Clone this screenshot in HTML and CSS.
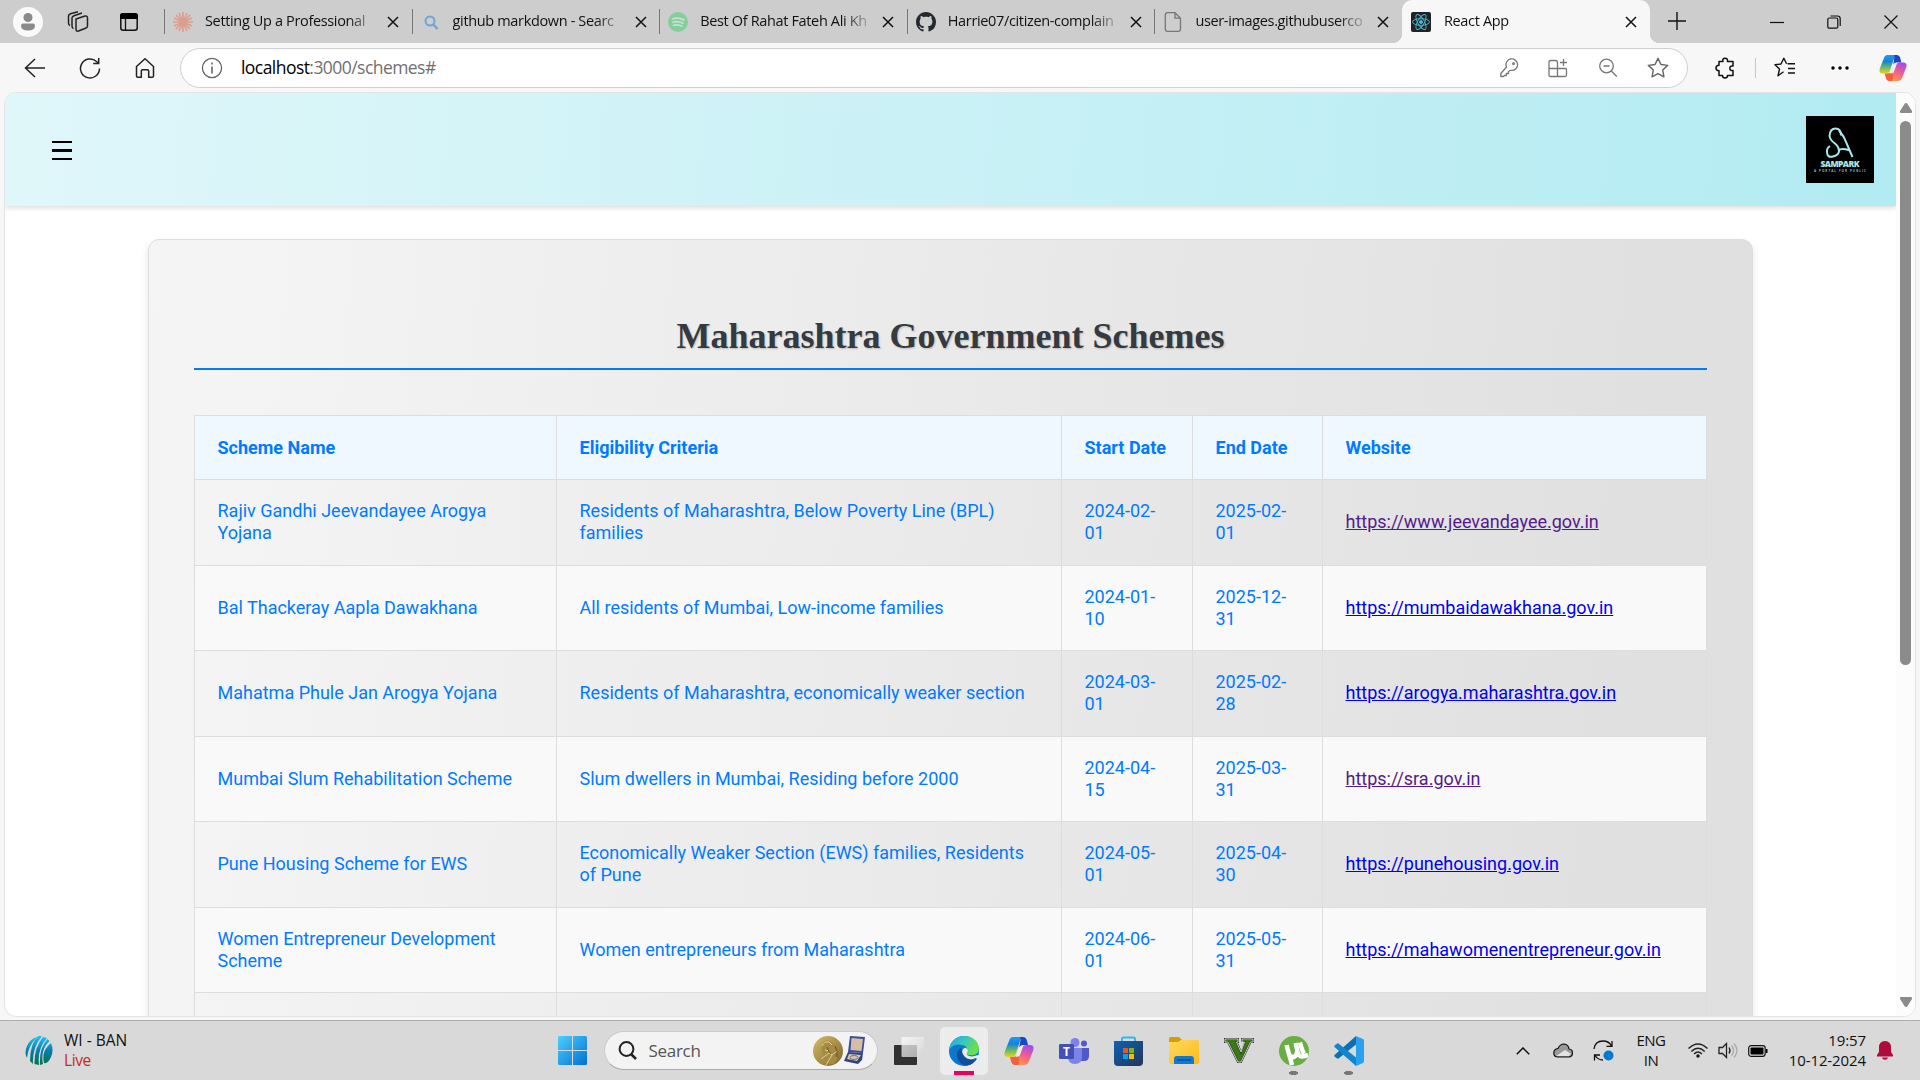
FILE: index.html
```html
<!DOCTYPE html>
<html lang="en">
<head>
<meta charset="utf-8">
<title>React App</title>
<link rel="stylesheet" href="styles.css">
</head>
<body>
<svg width="0" height="0" class="defs" aria-hidden="true">
  <defs>
    <linearGradient id="cpA" x1="0" y1="0" x2="0" y2="1"><stop offset="0" stop-color="#1a9cf0"/><stop offset=".35" stop-color="#1b7fe0"/><stop offset=".65" stop-color="#5fba6a"/><stop offset="1" stop-color="#f3cf1b"/></linearGradient>
    <linearGradient id="cpB" x1=".7" y1="0" x2=".3" y2="1"><stop offset="0" stop-color="#a24bf0"/><stop offset=".45" stop-color="#ee5a97"/><stop offset="1" stop-color="#ff9a45"/></linearGradient>
    <linearGradient id="blu" x1="0" y1="0" x2="1" y2="1"><stop offset="0" stop-color="#4cd0ff"/><stop offset="1" stop-color="#0070d0"/></linearGradient>
    <linearGradient id="edgeA" x1="0" y1="0" x2="1" y2=".4"><stop offset="0" stop-color="#1fa6e0"/><stop offset=".5" stop-color="#35c5c5"/><stop offset="1" stop-color="#6be04a"/></linearGradient>
    <linearGradient id="icc" x1="0" y1="0" x2="0" y2="30" gradientUnits="userSpaceOnUse"><stop offset="0" stop-color="#22c4f4"/><stop offset=".5" stop-color="#067cae"/><stop offset="1" stop-color="#08703c"/></linearGradient>
    <linearGradient id="fold" x1="0" y1="0" x2="1" y2="1"><stop offset="0" stop-color="#ffd95e"/><stop offset="1" stop-color="#fbbb18"/></linearGradient>
    <linearGradient id="gold" x1="0" y1="0" x2="1" y2="1"><stop offset="0" stop-color="#d5bd68"/><stop offset="1" stop-color="#7d6427"/></linearGradient>
    <linearGradient id="store" x1="0" y1="0" x2="1" y2="1"><stop offset="0" stop-color="#0d62b4"/><stop offset="1" stop-color="#263556"/></linearGradient>
    <linearGradient id="glass" x1="0" y1="0" x2="1" y2="1"><stop offset="0" stop-color="#fff"/><stop offset="1" stop-color="#d4d4d4"/></linearGradient>
    <clipPath id="utClip"><circle cx="15" cy="15" r="15"/></clipPath>
    <symbol id="copilot" viewBox="0 0 30 28">
      <path d="M19 0H9Q6 0 5 4L1 14q-2 6 3 6h4q3 0 4-4l4-12q1-4 5-4z" fill="url(#cpA)"/>
      <path d="M16 0h3q3 0 4 4l1 4h-4q-4 0-5 4l1-6q1-4 0-6z" fill="#1947c8"/>
      <path d="M11 28h9q4 0 5-4l4-10q2-6-3-6h-4q-3 0-4 4l-4 11q-1 5-5 5z" fill="url(#cpB)"/>
      <path d="M14 28h-3q-3 0-4-4l-1-4h3q4 0 5-4l1 5q1 4-1 7z" fill="#f2613c"/>
      <path d="M15 10.500q1.300-2.500 4.500-2.500L16 17.500q-1 2.500-4.300 2.500z" fill="#f0ecec"/>
    </symbol>
    <symbol id="x" viewBox="0 0 12 12"><path d="M1 1l10 10M11 1L1 11" fill="none" stroke="#111" stroke-width="1.500"/></symbol>
    <symbol id="star" viewBox="0 0 20 20"><path d="M10 1.200l2.700 5.600 6.100.8-4.500 4.300 1.100 6.100L10 15.100 4.600 18l1.100-6.100L1.200 7.600l6.100-.8z" fill="none" stroke="#666" stroke-width="1.300" stroke-linejoin="round"/></symbol>
  </defs>
</svg>

<header class="tabstrip">
  <div class="strip-tools">
    <span class="avatar"><svg width="16" height="18" viewBox="0 0 16 18" fill="#8a8a8a"><circle cx="8" cy="4.500" r="4.500"/><path d="M1 12.500q0-2 2-2h10q2 0 2 2 0 5-7 5t-7-5z"/></svg></span>
    <svg class="workspaces" width="22" height="22" viewBox="0 0 22 22" fill="none" stroke="#222" stroke-width="1.500"><path d="M9 8l9-3q2.500-.5 2.500 2v8q0 1.500-2 2.300l-7 2.700Q9 20.700 9 18z"/><path d="M6.500 17.500Q5 17 5 15V7q0-1.500 2-2.300L15 2"/><path d="M3 14.500Q1.500 14 1.500 12V5q0-1.500 2-2.300L11 .8"/></svg>
    <svg width="18" height="18" viewBox="0 0 18 18"><rect x=".8" y=".8" width="16.400" height="16.400" rx="2.500" fill="none" stroke="#111" stroke-width="1.500"/><path d="M0 3q0-3 3-3h12q3 0 3 3v3H0z"/><path d="M5.500 6v11" stroke="#111" stroke-width="1.300"/></svg>
  </div>
  <div class="tab"><svg class="fav" width="20" height="20" viewBox="0 0 20 20" stroke="#dc9d8d" stroke-width="1.700"><path d="M10 0v20M0 10h20M3 3l14 14M17 3L3 17M6 1l8 18M14 1L6 19M1 6l18 8M1 14l18-8"/></svg><span class="tab-title">Setting Up a Professional</span><svg class="tab-x"><use href="#x"/></svg></div>
  <div class="tab"><svg class="fav" width="20" height="20" viewBox="0 0 20 20" fill="none" stroke="#72a5d2" stroke-width="2"><circle cx="9" cy="9" r="4.500"/><path d="M12 12l4.500 5" stroke-width="2.500"/></svg><span class="tab-title">github markdown - Searc</span><svg class="tab-x"><use href="#x"/></svg></div>
  <div class="tab"><svg class="fav" width="20" height="20" viewBox="0 0 20 20" fill="none" stroke="#ceded2" stroke-width="1.700" stroke-linecap="round"><circle cx="10" cy="10" r="10" fill="#83cf9c" stroke="none"/><path d="M4.500 7q6-2 11.500 1M5 10.200q5-1.500 10 1M5.500 13.200q4.500-1.200 8.500 1"/></svg><span class="tab-title">Best Of Rahat Fateh Ali Kh</span><svg class="tab-x"><use href="#x"/></svg></div>
  <div class="tab"><svg class="fav" width="20" height="20" viewBox="0 0 16 16"><path fill="#24292f" d="M8 0C3.580 0 0 3.580 0 8c0 3.540 2.290 6.530 5.470 7.590.4.070.55-.17.55-.38 0-.19-.01-.82-.01-1.490-2.010.37-2.530-.49-2.690-.94-.09-.23-.48-.94-.82-1.130-.28-.15-.68-.52-.01-.53.63-.01 1.080.58 1.230.82.72 1.210 1.870.87 2.330.66.07-.52.28-.87.51-1.070-1.780-.2-3.640-.89-3.640-3.950 0-.87.31-1.590.82-2.150-.08-.2-.36-1.020.08-2.120 0 0 .67-.21 2.200.82.640-.18 1.320-.27 2-.27s1.360.09 2 .27c1.530-1.040 2.200-.82 2.200-.82.44 1.100.16 1.920.08 2.120.51.56.82 1.270.82 2.150 0 3.070-1.870 3.750-3.650 3.950.29.25.54.73.54 1.480 0 1.070-.01 1.930-.01 2.200 0 .21.150.46.55.38A8.010 8.010 0 0016 8c0-4.420-3.580-8-8-8z"/></svg><span class="tab-title">Harrie07/citizen-complain</span><svg class="tab-x"><use href="#x"/></svg></div>
  <div class="tab"><svg class="fav" width="20" height="20" viewBox="0 0 20 20" fill="none" stroke="#777" stroke-width="1.300"><path d="M4.500.7H12l5.500 5.500V17q0 2.300-2.300 2.300H4.500Q2.300 19.300 2.300 17V3Q2.300.7 4.500.7zM12 .7v5.500h5.500"/></svg><span class="tab-title">user-images.githubuserco</span><svg class="tab-x"><use href="#x"/></svg></div>
  <div class="tab active"><svg class="fav" width="20" height="20" viewBox="0 0 20 20" fill="none" stroke="#4fb9d6" stroke-width=".9"><rect width="20" height="20" rx="2" fill="#222" stroke="none"/><ellipse cx="10" cy="10" rx="8.500" ry="3.300"/><ellipse cx="10" cy="10" rx="8.500" ry="3.300" transform="rotate(60 10 10)"/><ellipse cx="10" cy="10" rx="8.500" ry="3.300" transform="rotate(120 10 10)"/><circle cx="10" cy="10" r="1.500" fill="#4fb9d6"/></svg><span class="tab-title">React App</span><svg class="tab-x"><use href="#x"/></svg></div>
  <svg class="newtab" width="18" height="18" viewBox="0 0 18 18" stroke="#111" stroke-width="1.400"><path d="M9 0v18M0 9h18"/></svg>
  <div class="winbtns">
    <svg width="14" height="14" viewBox="0 0 14 14" stroke="#111" stroke-width="1.200"><path d="M0 7.500h14"/></svg>
    <svg width="14" height="14" viewBox="0 0 14 14" fill="none" stroke="#111" stroke-width="1.200"><rect x=".8" y="3" width="10" height="10.200" rx="1.500"/><path d="M3.500 1h7q2.700 0 2.700 2.700V11"/></svg>
    <svg width="14" height="14" viewBox="0 0 14 14" stroke="#111" stroke-width="1.200"><path d="M.5.5l13 13M13.500.5l-13 13"/></svg>
  </div>
</header>

<nav class="toolbar">
  <div class="navbtns">
    <svg width="22" height="22" viewBox="0 0 22 22" fill="none" stroke="#222" stroke-width="1.500"><path d="M21 11H2M11 2l-9.500 9L11 20"/></svg>
    <svg width="22" height="22" viewBox="0 0 22 22" fill="none" stroke="#222" stroke-width="1.500"><path d="M20.500 11.500A9.500 9.500 0 1 1 17.500 4.500L19.500 6M19.700 1v5.500h-5.500"/></svg>
    <svg width="22" height="22" viewBox="0 0 22 22" fill="none" stroke="#222" stroke-width="1.500" stroke-linejoin="round"><path d="M2.500 9.500L11 1.800l8.500 7.700V19q0 1.300-1.300 1.300h-3.500V14q0-1.200-1.200-1.200h-5Q7.300 12.800 7.300 14v6.300H3.800q-1.300 0-1.300-1.300z"/></svg>
  </div>
  <div class="address">
    <svg width="22" height="22" viewBox="0 0 22 22" fill="none" stroke="#666" stroke-width="1.300"><circle cx="11" cy="11" r="9.600"/><path d="M11 9.500v7M11 5.500v2" stroke-width="1.600"/></svg>
    <span class="url"><b>localhost</b>:3000/schemes#</span>
    <div class="address-icons">
      <svg width="20" height="20" viewBox="0 0 20 20" fill="none" stroke="#777" stroke-width="1.300" stroke-linejoin="round"><path d="M7.500 9A5.800 5.800 0 1 1 11.500 12.300L9.500 13.500v2H7.300v2H5.500l-1 1H1.800v-3z"/><circle cx="14.500" cy="5.700" r=".8" fill="#777"/></svg>
      <svg width="20" height="20" viewBox="0 0 20 20" fill="none" stroke="#777" stroke-width="1.300"><path d="M9.500 18.500h-7q-1.500 0-1.500-1.500V4q0-1.500 1.500-1.500h5q2 0 2 2zM1 10.500h16.500q1 0 1 1V17q0 1.500-1.500 1.500H9.500M15.500 1v7M12 4.500h7"/></svg>
      <svg width="20" height="20" viewBox="0 0 20 20" fill="none" stroke="#777" stroke-width="1.300"><circle cx="8.500" cy="8" r="6.800"/><path d="M5.500 8h6M13.300 13l5.500 5.500"/></svg>
      <svg width="22" height="22"><use href="#star"/></svg>
    </div>
  </div>
  <svg class="ext" width="20" height="22" viewBox="0 0 20 22" fill="none" stroke="#111" stroke-width="1.500" stroke-linejoin="round"><path d="M4 4.500h4Q7 1.200 10 1.200t2.500 3.300H18v4.500q-3.200-.5-3.200 2.200T18 13.500v5h-5.500q0 2.500-2.500 2.500t-2.500-2.500H4v-4.700q-3-.3-3-2.800t3-2.700z"/></svg>
  <span class="sep"></span>
  <svg class="favs" width="22" height="22" viewBox="0 0 22 22" fill="none" stroke="#111" stroke-width="1.400" stroke-linejoin="round"><path d="M13.500 6.800h7.500M14 11.500h7M14 16h7M9.500 14.800L4 18.800l1.500-6.800L1 7.700l6-.7L9.800 1.200l2.800 5.600"/></svg>
  <svg class="dots" width="18" height="4" viewBox="0 0 18 4"><circle cx="2" cy="2" r="1.700"/><circle cx="9" cy="2" r="1.700"/><circle cx="16" cy="2" r="1.700"/></svg>
  <svg class="cp" width="28" height="26"><use href="#copilot"/></svg>
</nav>

<div class="viewport-frame">
  <div class="page">
    <div class="site-header">
      <svg class="menu" width="20" height="20" viewBox="0 0 20 20" fill="#000"><path d="M0 1h20v2H0zM0 9h20v3H0zM0 18h20v2H0z"/></svg>
      <svg class="logo" width="68" height="67" viewBox="0 0 68 67"><rect width="68" height="67" fill="#000"/><g fill="none" stroke="#a9e7ee" stroke-width="2"><path d="M35 19.500Q35 12.500 29.500 12.500T23.500 20Q24 24 29 27.500 33 31 33 35T27 40.500 21 36Q20.500 32 24 30"/><path d="M33 14.500Q38 20 40 26L46.500 41M32 34.500q4-3 11-.2"/></g><text x="34" y="51" text-anchor="middle" textLength="39" fill="#a9e7ee" class="logo-name">SAMPARK</text><text x="34" y="55.500" text-anchor="middle" textLength="52" fill="#8bbcc2" class="logo-sub">A PORTAL FOR PUBLIC</text></svg>
    </div>
    <main class="card">
      <h2>Maharashtra Government Schemes</h2>
      <table>
        <colgroup><col class="c1"><col class="c2"><col class="c3"><col class="c4"><col class="c5"></colgroup>
        <thead><tr><th>Scheme Name</th><th>Eligibility Criteria</th><th>Start Date</th><th>End Date</th><th>Website</th></tr></thead>
        <tbody>
          <tr><td>Rajiv Gandhi Jeevandayee Arogya Yojana</td><td>Residents of Maharashtra, Below Poverty Line (BPL) families</td><td>2024-02-<br>01</td><td>2025-02-<br>01</td><td><a class="visited" href="#">https://www.jeevandayee.gov.in</a></td></tr>
          <tr><td>Bal Thackeray Aapla Dawakhana</td><td>All residents of Mumbai, Low-income families</td><td>2024-01-<br>10</td><td>2025-12-<br>31</td><td><a href="#">https://mumbaidawakhana.gov.in</a></td></tr>
          <tr><td>Mahatma Phule Jan Arogya Yojana</td><td>Residents of Maharashtra, economically weaker section</td><td>2024-03-<br>01</td><td>2025-02-<br>28</td><td><a href="#">https://arogya.maharashtra.gov.in</a></td></tr>
          <tr><td>Mumbai Slum Rehabilitation Scheme</td><td>Slum dwellers in Mumbai, Residing before 2000</td><td>2024-04-<br>15</td><td>2025-03-<br>31</td><td><a class="visited" href="#">https://sra.gov.in</a></td></tr>
          <tr><td>Pune Housing Scheme for EWS</td><td>Economically Weaker Section (EWS) families, Residents of Pune</td><td>2024-05-<br>01</td><td>2025-04-<br>30</td><td><a href="#">https://punehousing.gov.in</a></td></tr>
          <tr><td>Women Entrepreneur Development Scheme</td><td>Women entrepreneurs from Maharashtra</td><td>2024-06-<br>01</td><td>2025-05-<br>31</td><td><a href="#">https://mahawomenentrepreneur.gov.in</a></td></tr>
          <tr><td></td><td></td><td></td><td></td><td></td></tr>
        </tbody>
      </table>
    </main>
  </div>
  <div class="scrollbar">
    <svg width="14" height="10" viewBox="0 0 14 10"><path d="M7 0q1 0 1.500 1L13 8q.5 2-1 2H2Q.5 10 1 8l4.500-7Q6 0 7 0z" fill="#8b8b8b"/></svg>
    <span class="thumb"></span>
    <svg class="down" width="14" height="10" viewBox="0 0 14 10"><path d="M7 10q1 0 1.500-1L13 2q.5-2-1-2H2Q.5 0 1 2l4.500 7Q6 10 7 10z" fill="#8b8b8b"/></svg>
  </div>
</div>

<footer class="taskbar">
  <div class="widget">
    <svg width="28" height="30" viewBox="0 0 28 30" fill="url(#icc)"><path d="M12 1Q5 3 2 10t0 12q1-12 10-21zM17 0h-4Q5 8 5 25l3 3Q7 12 17 0zM22 2l-4-1Q9 12 9.500 28l4.500 1Q12 13 22 2zM24.500 5l-2-2Q14 12 15 29l3-1q-3-14 6.500-23zM26 7q3 7 0 14t-7 6q-3-12 7-20z"/></svg>
    <div><p>WI - BAN</p><p class="live">Live</p></div>
  </div>
  <svg class="start" width="29" height="29" viewBox="0 0 29 29" fill="url(#blu)"><path d="M1.500 0H14v14H0V1.500Q0 0 1.500 0zM15 0h12.500Q29 0 29 1.500V14H15zM0 15h14v14H1.500Q0 29 0 27.500zM15 15h14v12.500q0 1.500-1.500 1.500H15z"/></svg>
  <div class="search">
    <svg width="19" height="19" viewBox="0 0 19 19" fill="none" stroke="#222" stroke-width="2"><circle cx="8.500" cy="8" r="6.900"/><path d="M13 13l5 5" stroke-width="2.500"/></svg>
    <span>Search</span>
    <svg class="medals" width="53" height="30" viewBox="0 0 53 30"><circle cx="15" cy="15" r="15" fill="url(#gold)"/><path d="M9 8q3-5 8-3 4 2 4 6l1 3-2 1v4l5 3-4 6-13-1 3-7q-4-5-2-12z" fill="#a58c45"/><path d="M9 10q2-5 7-4l3 3M12 14l4 1M8 23l8-6 3 2-6 10M19 19l5-4" fill="none" stroke="#ded095" stroke-width="1"/><path d="M14 11q2 6 4 7M22 10q3 5 2 11" fill="none" stroke="#6d5620" stroke-width="1"/><path d="M37 0l15 1-2 16-15-1z" fill="#3b4f94"/><path d="M38.500 2l11.500 1-1.500 12-11-1z" fill="#d5bda7"/><path d="M35 16l15 1-1 7-4 4-14-3z" fill="#314384"/><path d="M36 18l12 1-4 6-10-2z" fill="#d5c5b6"/><ellipse cx="41" cy="21.500" rx="4" ry="2" fill="none" stroke="#8a7565"/></svg>
  </div>
  <div class="apps">
    <span class="app"><svg width="30" height="28" viewBox="0 0 30 28"><rect x="0" y="8" width="23" height="20" rx="1" fill="#313131"/><rect x="7.500" y="0" width="22.500" height="20" rx="1" fill="url(#glass)" opacity=".75"/></svg></span>
    <span class="app current"><svg width="30" height="30" viewBox="0 0 30 30"><circle cx="15" cy="15" r="15" fill="#0b78d0"/><path d="M0 14Q2 1 15 0q10 0 14 8 3 9-4 11-5 1-8-1-1-1 1-3 1-5-5-6Q5 7 0 14z" fill="url(#edgeA)"/><path d="M12.500 11.500Q6.500 15 8.500 22t9 7.700Q24 29 28 22.500q-7 3.500-12-1.500-4-4-3.500-9.500z" fill="#0f4f9c"/><path d="M15.500 11.800q4 .5 3 4-2 2.500 1 4 4 1.500 8.500-.5h3v3.200l-3 1q0-2-1.500-1.500-6 3-10.500-1-5.500-6-.5-9.200z" fill="#ececec"/></svg></span>
    <span class="app"><svg width="30" height="28"><use href="#copilot"/></svg></span>
    <span class="app"><svg width="30" height="26" viewBox="0 0 30 26"><circle cx="16" cy="4.500" r="4.500" fill="#7b83eb"/><circle cx="25" cy="5.500" r="3" fill="#5059c9"/><path d="M19 10h11v8q0 5-5 5h-6z" fill="#5059c9"/><path d="M9 10h14v9q0 7-7 7t-7-7z" fill="#7b83eb"/><rect y="6" width="15" height="15" rx="1.300" fill="#4550b5"/><text x="7.500" y="17.800" text-anchor="middle" fill="#fff" class="t-mark">T</text></svg></span>
    <span class="app"><svg width="29" height="30" viewBox="0 0 29 30"><path d="M8 7V3q0-1.500 1.500-1.500h10Q21 1.500 21 3v4" fill="none" stroke="#2cbbee" stroke-width="2"/><path d="M0 5h29v21q0 4-4 4H4q-4 0-4-4z" fill="url(#store)"/><path fill="#f25022" d="M9 12h5v5H9z"/><path fill="#7fba00" d="M15 12h5v5h-5z"/><path fill="#00a4ef" d="M9 18h5v5H9z"/><path fill="#ffb900" d="M15 18h5v5h-5z"/></svg></span>
    <span class="app"><svg width="30" height="27" viewBox="0 0 30 27"><path d="M0 2q0-2 2-2h8l3 3-3 4H0z" fill="#dc9a06"/><path d="M0 5h9l3-2h16q2 0 2 2v20q0 2-2 2H2q-2 0-2-2z" fill="url(#fold)"/><path d="M5 27v-5q0-3 3-3h14q3 0 3 3v5z" fill="#1179cf"/><path d="M8 23h14" stroke="#0a4c94" stroke-width="1.300"/></svg></span>
    <span class="app"><svg width="30" height="25" viewBox="0 0 30 25"><path d="M1 1h13v3h-1.500l4.500 10L20.500 4H18V1h11v3h-2.500L17 24h-3L4 4H1z" fill="#377b12" stroke="#333" stroke-width="2"/><path d="M1 1h13v3h-1.500l4.500 10L20.500 4H18V1h11v3h-2.500L17 24h-3L4 4H1z" fill="none" stroke="#ddd" stroke-width=".9"/><path d="M16 4h4l-3 9z" fill="#d8d8d8"/></svg></span>
    <span class="app running"><svg width="30" height="30" viewBox="0 0 30 30"><circle cx="15" cy="15" r="15" fill="#6aad42"/><g clip-path="url(#utClip)" fill="none" stroke="#fff" stroke-width="4.500"><path d="M7.500 9L13 29M9 15q2 7 6 6 4-2 3-8l-1.500-6M18 14q2 7 5 6.500 3-.5 6-1.500"/><path d="M21 6.500q2 8 4 11"/></g></svg></span>
    <span class="app running"><svg width="30" height="30" viewBox="0 0 30 30"><path d="M22 0v8.500L4.500 22.500Q3.500 23 2.500 22L.5 20.500Q0 19.500.5 19z" fill="#0b6fb3"/><path d="M22 30v-8.500L4.500 7.500Q3.500 7 2.500 8L.5 9.500Q0 10.500.5 11z" fill="#1186cf"/><path d="M22 0l7 3q1 .5 1 2v20q0 1.500-1 2l-7 3z" fill="#28a2ee"/></svg></span>
  </div>
  <div class="tray">
    <svg class="chev" width="14" height="8" viewBox="0 0 14 8" fill="none" stroke="#111" stroke-width="1.500"><path d="M.8 7.300L7 1l6.200 6.300"/></svg>
    <svg class="cloud" width="20" height="15" viewBox="0 0 20 15"><path d="M5 14Q.8 14 .8 10T5 5.500Q7 1 11 1q4.500.5 5 5 3.500.5 3.500 4T16 14z" fill="#999" stroke="#111" stroke-width="1.200"/><path d="M3 13l9-6 6 4-2 2z" fill="#e3e3e3"/></svg>
    <svg class="sync" width="21" height="21" viewBox="0 0 21 21" fill="none" stroke="#111" stroke-width="1.300"><path d="M1 9Q2 1 10 1q6 0 8.500 5M19 1v5.300h-5.500M10 20q-5 0-8-4.500M1.500 20.500V15H7"/><circle cx="15.500" cy="15.500" r="5" fill="#0078d4" stroke="none"/></svg>
    <div class="lang"><p>ENG</p><p>IN</p></div>
    <svg class="wifi" width="20" height="15" viewBox="0 0 20 15" fill="none" stroke="#222" stroke-width="1.400"><path d="M.5 5.500q9.500-9 19 0M3.300 8.500q6.700-6.500 13.400 0M6 11q4-4 8 0"/><circle cx="10" cy="13" r="1.700" fill="#111" stroke="none"/></svg>
    <svg class="vol" width="20" height="17" viewBox="0 0 20 17" fill="none" stroke="#222" stroke-width="1.300"><path d="M1 5.500h3.500L8.500 1.500v14l-4-4H1z"/><path d="M11 5.500q2 3 0 6"/><path d="M13.500 3.500q4 5 0 10M16 1.500q6 7 0 14" stroke="#aaa"/></svg>
    <svg class="bat" width="20" height="12" viewBox="0 0 20 12"><rect x=".7" y=".7" width="16.500" height="10.600" rx="2.500" fill="none" stroke="#111" stroke-width="1.200"/><rect x="2.500" y="2.500" width="13" height="7" rx="1"/><path d="M18 4h1.500v4H18z"/></svg>
    <div class="clock"><p>19:57</p><p>10-12-2024</p></div>
    <svg class="bell" width="16" height="19" viewBox="0 0 16 19" fill="#b00b3c"><path d="M8 0q6 0 6 6.500V11l2 3v1.500H0V14l2-3V6.500Q2 0 8 0zM5 16.500h6q-.5 2.300-3 2.300t-3-2.300z"/></svg>
  </div>
</footer>
</body>
</html>
```

FILE: styles.css
```css
* { box-sizing: border-box; }
html, body { height: 100%; }
body { margin: 0; width: 1920px; height: 1080px; overflow: hidden; display: flex; flex-direction: column; background: #f7f7f7; font-family: "Open Sans", sans-serif; color: #111; }
p { margin: 0; }
svg { display: block; flex: none; }
.defs { position: absolute; }

/* Browser tab strip */
.tabstrip { height: 43px; flex: none; background: #cdcdcd; display: flex; align-items: stretch; }
.strip-tools { width: 164px; flex: none; display: flex; align-items: center; padding-left: 13px; }
.avatar { width: 30px; height: 30px; border-radius: 50%; background: #fafafa; display: flex; align-items: center; justify-content: center; }
.workspaces { margin: 0 31px 0 24px; }
.tab { width: 247.600px; flex: none; display: flex; align-items: center; padding-left: 9px; background: linear-gradient(#777, #777) 0 9px / 1px 25px no-repeat; }
.tab-title { margin-left: 12px; width: 176px; flex: none; padding-bottom: 2px; font-size: 14.500px; letter-spacing: -.35px; line-height: 20px; white-space: nowrap; -webkit-mask-image: linear-gradient(90deg, #000 143px, transparent 174px); mask-image: linear-gradient(90deg, #000 143px, transparent 174px); }
.tab-x { width: 12px; height: 12px; margin-left: 6px; }
.tab.active { background: #f7f7f7; border-radius: 10px 10px 0 0; position: relative; }
.active .tab-title { margin-left: 13px; width: 175px; }
.tab.active::before, .tab.active::after { content: ""; position: absolute; bottom: 0; width: 9px; height: 9px; }
.tab.active::before { left: -9px; background: radial-gradient(circle at 0 0, transparent 9px, #f7f7f7 9px); }
.tab.active::after { right: -9px; background: radial-gradient(circle at 100% 0, transparent 9px, #f7f7f7 9px); }
.newtab { margin: 12px 0 0 18px; }
.winbtns { margin-left: auto; display: flex; align-items: center; gap: 43px; padding-right: 22px; }

/* Address toolbar */
.toolbar { height: 49px; flex: none; display: flex; align-items: center; }
.navbtns { width: 180px; flex: none; display: flex; gap: 33px; padding-left: 24px; }
.address { width: 1508px; height: 40px; border: 1px solid #cfcfcf; border-radius: 20px; background: #fff; display: flex; align-items: center; padding-left: 20px; }
.url { margin-left: 18px; padding-bottom: 2px; font-size: 17.500px; letter-spacing: -.55px; color: #707070; }
.url b { font-weight: 400; color: #000; }
.address-icons { margin-left: auto; display: flex; align-items: center; gap: 29.500px; padding-right: 18px; }
.ext { margin-left: 27px; }
.sep { width: 1px; height: 20px; background: #c7c7c7; margin-left: 20px; }
.favs { margin-left: 18px; }
.dots { margin-left: 35px; }
.cp { margin-left: 30px; }

/* Rendered page */
.viewport-frame { margin: 0 4px 0 4px; height: 925px; flex: none; display: flex; border: 1px solid #e3e3e3; border-radius: 12px; overflow: hidden; background: #fff; }
.page { width: 1891px; flex: none; overflow: hidden; }
.site-header { height: 113px; display: flex; align-items: center; justify-content: space-between; padding: 0 22px 0 47px; background: linear-gradient(95deg, #e0f7fa, #b2ebf2); box-shadow: 0 2px 5px rgba(0,0,0,.14); }
.logo-name { font: 800 8.500px "Open Sans", sans-serif; }
.logo-sub { font: 700 3px "Open Sans", sans-serif; }
.card { margin: 33px 0 0 143px; width: 1605px; height: 1100px; padding: 0 45px; border: 1px solid #ddd; border-radius: 11px; background: linear-gradient(95deg, #f5f5f5, #e0e0e0 90%); box-shadow: 0 4px 9px rgba(0,0,0,.1); }
h2 { margin: 72px 0 45px; height: 58px; border-bottom: 2px solid #007bff; text-align: center; font: 700 36px/49px "Liberation Serif", serif; color: #343a40; text-shadow: 1px 1px 2px rgba(0,0,0,.2); }
table { width: 1513px; table-layout: fixed; border-collapse: collapse; font: 18px/22px Roboto, sans-serif; color: #007bff; }
th, td { border: 1px solid #ddd; padding: 0 22.500px; text-align: left; vertical-align: middle; }
thead tr { height: 64px; }
tbody tr { height: 85.500px; }
th { background: #f0f8ff; font-weight: 700; }
tbody tr:nth-child(even) { background: #f9f9f9; }
.c1 { width: 362px; }
.c2 { width: 505px; }
.c3 { width: 131px; }
.c4 { width: 130px; }
a { color: #0000ee; }
a.visited { color: #551a8b; }
.scrollbar { flex: 1; background: #fcfcfc; display: flex; flex-direction: column; align-items: center; padding: 10px 0 9px; }
.thumb { width: 11px; height: 544px; border-radius: 6px; background: #8b8b8b; margin-top: 8px; }
.down { margin-top: auto; }

/* Taskbar */
.taskbar { margin-top: 3px; height: 60px; flex: none; background: #d9d9d9; border-top: 1px solid #adadad; display: flex; align-items: center; font-size: 15px; line-height: 20px; }
.taskbar p { transform: translateY(-1px); }
.widget { width: 558px; flex: none; display: flex; gap: 11px; padding-left: 25px; align-items: center; font-size: 15.500px; }
.live { color: #c42b1c; letter-spacing: -.4px; }
.search { margin-left: 16.500px; width: 274px; height: 39px; border-radius: 20px; background: #f3f3f3; border: 1px solid #cacaca; border-bottom-color: #aaa; display: flex; align-items: center; padding: 0 11px 0 13px; font-size: 17px; letter-spacing: -.3px; color: #555; }
.search span { margin-left: 12px; }
.medals { margin-left: auto; }
.apps { display: flex; margin-left: 3.500px; }
.app { width: 55px; height: 48px; display: flex; align-items: center; justify-content: center; background: no-repeat center bottom / 9px 4px; }
.current { width: 48px; margin: 0 3.500px; border-radius: 5px; background: linear-gradient(#ea005e, #ea005e) center bottom / 20px 4px no-repeat, #ececec; }
.running { background-image: radial-gradient(ellipse, #777 70%, transparent 72%); }
.t-mark { font: 700 12px "Open Sans", sans-serif; }
.tray { margin-left: auto; display: flex; align-items: center; padding-right: 27px; }
.cloud { margin-left: 23px; }
.sync { margin-left: 20px; }
.lang { width: 40px; margin-left: 17px; text-align: center; letter-spacing: -.5px; }
.wifi { margin-left: 17px; }
.vol { margin-left: 10px; }
.bat { margin-left: 10px; }
.clock { width: 98px; text-align: right; letter-spacing: -.1px; }
.bell { margin-left: 11px; }
```
